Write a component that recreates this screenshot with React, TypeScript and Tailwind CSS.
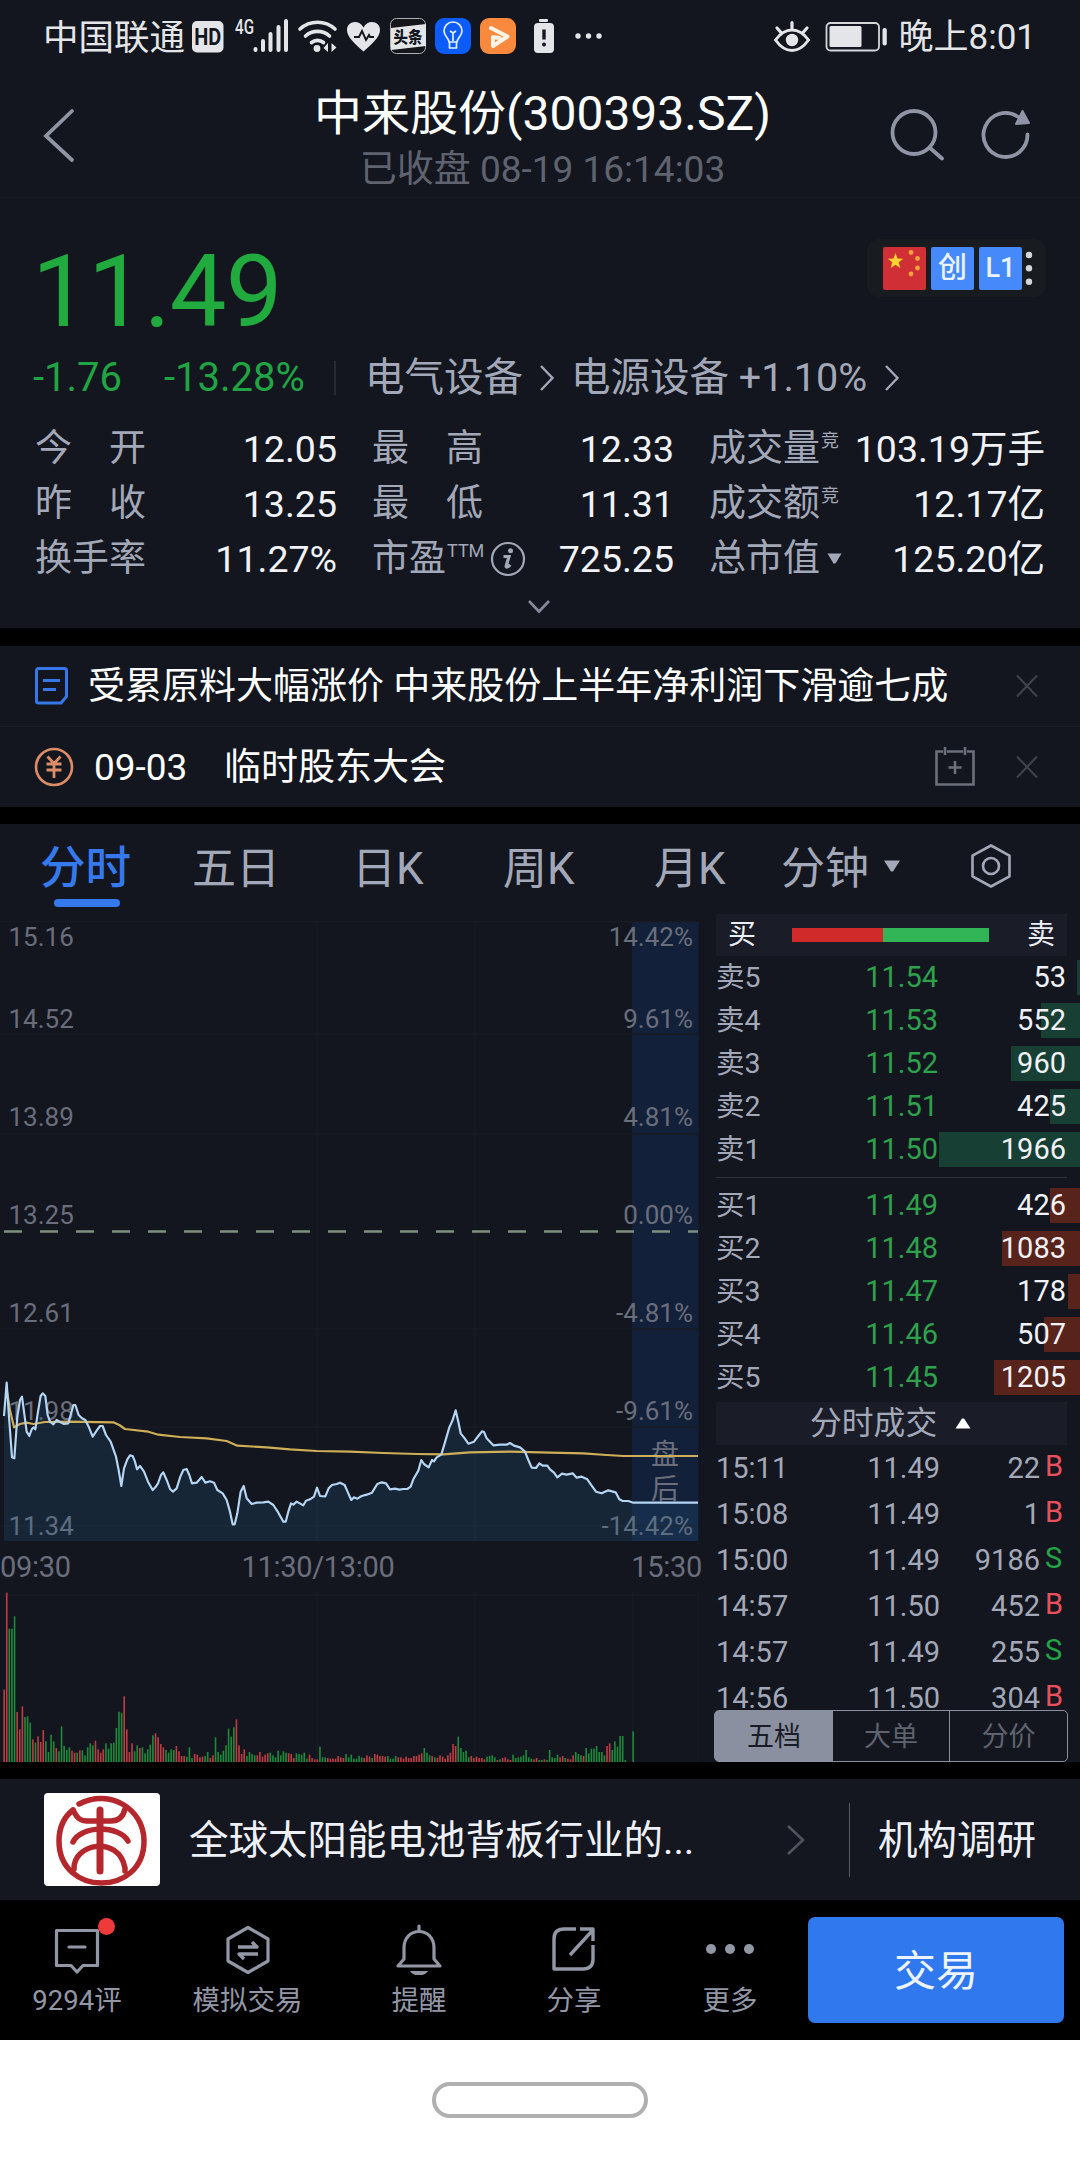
import React from "react";

const GRID_CELLS = [
  [
    { label: ["今", "开"], value: "12.05" },
    { label: ["最", "高"], value: "12.33" },
    { label: ["成交量"], sup: "竞", value: "103.19万手" },
  ],
  [
    { label: ["昨", "收"], value: "13.25" },
    { label: ["最", "低"], value: "11.31" },
    { label: ["成交额"], sup: "竞", value: "12.17亿" },
  ],
  [
    { label: ["换手率"], value: "11.27%" },
    { label: ["市盈"], sup: "TTM", info: true, value: "725.25" },
    { label: ["总市值"], arrow: true, value: "125.20亿" },
  ],
] as { label: string[]; value: string; sup?: string; info?: boolean; arrow?: boolean }[][];

const SELLS = [
  { name: "卖5", price: "11.54", qty: "53", bar: 3 },
  { name: "卖4", price: "11.53", qty: "552", bar: 39 },
  { name: "卖3", price: "11.52", qty: "960", bar: 69 },
  { name: "卖2", price: "11.51", qty: "425", bar: 30 },
  { name: "卖1", price: "11.50", qty: "1966", bar: 141 },
];
const BUYS = [
  { name: "买1", price: "11.49", qty: "426", bar: 30 },
  { name: "买2", price: "11.48", qty: "1083", bar: 78 },
  { name: "买3", price: "11.47", qty: "178", bar: 12 },
  { name: "买4", price: "11.46", qty: "507", bar: 36 },
  { name: "买5", price: "11.45", qty: "1205", bar: 86 },
];
const TRADES = [
  ["15:11", "11.49", "22", "B"],
  ["15:08", "11.49", "1", "B"],
  ["15:00", "11.49", "9186", "S"],
  ["14:57", "11.50", "452", "B"],
  ["14:57", "11.49", "255", "S"],
  ["14:56", "11.50", "304", "B"],
];

// Chart series use a unit of one third of a pixel.
const PRICE =
  "12,228 20,128 27,230 36,352 43,355 52,230 60,180 66,170 72,215 80,275 88,288 95,268 101,262 106,268 114,215 122,168 128,160 136,168 143,225 150,245 160,253 170,240 180,246 192,252 205,250 212,225 220,195 226,195 236,225 246,235 256,240 266,260 278,290 290,272 300,258 308,258 318,285 332,305 348,350 356,390 364,438 372,385 382,358 390,346 398,348 405,365 411,388 420,378 432,395 444,425 458,450 466,442 474,430 483,405 490,397 500,420 510,447 519,455 530,445 541,410 550,390 560,387 568,405 576,430 590,428 605,411 616,428 630,424 642,428 652,450 668,460 680,480 690,515 698,553 704,553 712,520 722,455 731,438 740,475 755,492 770,488 790,487 805,485 820,495 835,518 850,545 857,545 865,515 873,490 880,494 890,485 910,496 918,482 930,478 942,470 951,443 960,468 976,469 986,445 996,435 1010,432 1020,428 1034,435 1044,458 1054,480 1062,472 1072,476 1085,468 1100,464 1116,458 1132,432 1145,427 1158,430 1170,448 1185,446 1198,449 1210,447 1222,447 1232,440 1240,418 1255,392 1264,360 1272,372 1286,382 1296,360 1302,364 1310,352 1324,344 1334,310 1348,262 1358,240 1367,211 1375,245 1382,280 1394,295 1405,311 1422,305 1435,288 1446,274 1452,276 1460,295 1480,316 1500,314 1520,314 1530,309 1542,317 1560,322 1575,335 1585,360 1595,383 1608,384 1618,370 1628,377 1642,377 1650,388 1662,398 1672,412 1686,401 1700,404 1718,400 1730,413 1745,410 1762,418 1775,437 1788,455 1805,460 1825,451 1847,457 1858,478 1868,483 1885,483 1900,488 2094,488";
const AVERAGE =
  "20,150 30,210 42,262 60,252 80,248 100,252 135,246 200,245 340,247 358,255 375,267 445,275 475,284 540,291 620,295 680,303 712,317 800,322 870,328 950,333 1050,335 1150,339 1250,342 1330,343 1410,337 1530,335 1650,338 1750,340 1820,345 1870,348 2094,348";
const VOLUME =
  "r217 r508 g400 g400 g437 r150 r98 r167 g135 g137 g118 r68 g58 r77 r60 r96 g62 g30 g82 g62 r42 g32 g107 g48 g36 g44 r34 r28 g28 r35 g35 g20 g44 g56 g50 r64 r38 r28 r38 g56 g40 g56 g58 g102 g151 g148 r197 r98 r30 r56 g32 g50 r42 g44 g26 g38 g52 g80 r86 r74 r54 r44 g36 g28 g38 g36 r48 r32 r18 r18 g16 g44 g12 r24 r22 r14 r16 g18 g30 r12 r20 g74 g30 g22 g34 g50 g100 g76 g104 r128 r50 r24 r38 g18 g30 g24 g20 r20 r30 r16 r22 r26 g28 g20 g14 g34 g20 g32 g28 r26 r24 r12 g26 g24 g22 g28 g10 r22 r12 r8 r8 g46 g14 g14 r12 r10 r10 r10 r18 r14 r12 g24 g14 g22 g10 g10 g18 g14 r12 r20 r16 g12 r24 r22 r18 r18 r16 g18 g10 g10 g18 r14 r14 r10 r16 r12 r12 r18 r18 r22 r26 g42 g28 g20 r18 g14 r12 r20 r16 r10 r20 r28 r54 r48 g76 g42 g30 g34 g14 r18 r12 r16 r12 r12 r8 g16 g18 g20 g14 r6 g8 r12 r14 r8 r6 g22 g12 g14 g16 g20 g36 g14 g10 r8 r12 g6 g6 r8 g6 g36 g14 g12 g22 r14 r18 g12 r10 r8 r20 g30 g24 g20 r18 g42 g26 g40 g40 g48 g30 g30 g20 r48 r56 g36 g62 g46 g78 g78 g6 g0 g0 g92".split(
    " "
  );

const LEVELS: [string, string, number][] = [
  ["15.16", "14.42%", 937],
  ["14.52", "9.61%", 1019],
  ["13.89", "4.81%", 1117],
  ["13.25", "0.00%", 1215],
  ["12.61", "-4.81%", 1313],
  ["11.98", "-9.61%", 1411],
  ["11.34", "-14.42%", 1526],
];

function StatusBar() {
  return (
    <div className="flex h-[74px] items-center pl-[43px] pr-[44px] pt-[2px] text-[35px] leading-[72px] text-[#e4e5e8]">
      <span className="w-[149px] whitespace-nowrap text-[35.500px]">中国联通</span>
      <svg width="416" height="44" viewBox="192 16 416 44" fill="none">
        <rect x="192" y="21" width="31.5" height="31.5" rx="5" fill="#e4e5e8" />
        <text x="207.8" y="45" textAnchor="middle" fontSize="23" fontWeight="700" fill="#13161e" textLength="27" lengthAdjust="spacingAndGlyphs">HD</text>
        <text x="235" y="34" fontSize="20" fontWeight="500" fill="#e4e5e8" textLength="19" lengthAdjust="spacingAndGlyphs">4G</text>
        <g stroke="#e4e5e8" strokeWidth="4" strokeLinecap="round">
          <path d="M255.5 49v1M263 41v9M270.5 34v16M278.5 27v23M286 21v29" />
        </g>
        <g stroke="#e4e5e8" strokeWidth="3.6" strokeLinecap="round">
          <path d="M300 29a26 26 0 0 1 35 0M305.500 36a18 18 0 0 1 24 0M311.500 42.500a9.500 9.500 0 0 1 12 0" />
        </g>
        <circle cx="317" cy="48.500" r="3.400" fill="#e4e5e8" />
        <path d="M328 43v9l-4.500-4zM331.500 52v-9l5 4.500z" fill="#e4e5e8" />
        <path d="M363.500 51.500C355 44 347 37 347 30c0-9 12-11 16.500-2.500C368 19 380 21 380 30c0 7-8 14-16.500 21.500z" fill="#e4e5e8" />
        <path d="M354 37h5l3-6 4 9 3-5 1 2h4" stroke="#13161e" strokeWidth="1.900" />
        <rect x="390.500" y="18.500" width="35" height="35" rx="6" stroke="#aeb0b3" fill="#14161b" />
        <path d="M391 28l35-4v22l-35 4z" fill="#e4e5e8" />
        <text x="408" y="43" textAnchor="middle" fontSize="16" fontWeight="900" fill="#13161e" textLength="29" lengthAdjust="spacingAndGlyphs">头条</text>
        <rect x="435" y="18" width="36" height="36" rx="9" fill="#0b5cfb" />
        <path d="M449 42c0-4-5-6-5-11a9 9 0 0 1 18 0c0 5-5 7-5 11zM449.500 42v6h7v-6M453 41v-9M450 31l3 2 3-2" stroke="#e8f0ff" strokeWidth="1.700" strokeLinejoin="round" />
        <rect x="480" y="18" width="36" height="36" rx="9" fill="#f8893d" />
        <path d="M491 28l16.500 8.500L493 46v-9l6.500 1" stroke="#fff3e6" strokeWidth="4" strokeLinejoin="round" strokeLinecap="round" />
        <rect x="534" y="23" width="20" height="30" rx="4" fill="#e4e5e8" />
        <rect x="539" y="19" width="9" height="3" rx="1" fill="#e4e5e8" />
        <path d="M544 29.500v10" stroke="#13161e" strokeWidth="3.400" />
        <circle cx="544" cy="44.500" r="2" fill="#13161e" />
        <circle cx="578" cy="36" r="2.700" fill="#e4e5e8" />
        <circle cx="588.500" cy="36" r="2.700" fill="#e4e5e8" />
        <circle cx="599" cy="36" r="2.700" fill="#e4e5e8" />
      </svg>
      <div className="flex-1" />
      <svg width="116" height="36" viewBox="773 20 116 36" fill="none" className="mr-[10px] shrink-0">
        <path d="M775.500 40c5-7 10.500-10 16.500-10s11.500 3 16.500 10c-5 7-10.500 10.500-16.500 10.500S780.500 47 775.500 40z" stroke="#e4e5e8" strokeWidth="3" />
        <circle cx="792" cy="40" r="6.200" fill="#e4e5e8" />
        <path d="M792 22.500v6M777 28l4 4.500M807 28l-4 4.500" stroke="#e4e5e8" strokeWidth="3.200" strokeLinecap="round" />
        <rect x="826.500" y="23" width="52.500" height="27.500" rx="4" stroke="#d5d6d9" strokeWidth="1.800" />
        <rect x="829.500" y="26" width="32" height="21" rx="1.500" fill="#e4e5e8" />
        <rect x="882.500" y="28" width="4.300" height="17.500" rx="2" fill="#e4e5e8" />
      </svg>
      <span className="whitespace-nowrap">晚上8:01</span>
    </div>
  );
}

function Header() {
  return (
    <div className="flex h-[124px] items-start justify-between border-b border-[#171a22] pl-[42px] pr-[48px]">
      <svg width="140" height="60" viewBox="42 105 140 60" fill="none" className="mt-[31px]">
        <path d="M72 111L46 136l26 24" stroke="#8f95a5" strokeWidth="3.800" strokeLinecap="round" />
      </svg>
      <div className="flex flex-col items-center pl-[15px] pt-[1px]">
        <div className="h-[78px] text-[48px] leading-[78px] text-white">中来股份(300393.SZ)</div>
        <div className="h-[36px] text-[37px] leading-[34px] text-[#5f636f]">已收盘 08-19 16:14:03</div>
      </div>
      <svg width="144" height="60" viewBox="888 106 144 60" fill="none" className="mt-[31px]" stroke="#8f95a5" strokeWidth="3.800" strokeLinecap="round">
        <circle cx="914" cy="133.500" r="21.500" />
        <path d="M930 149l12 10.500M1027.500 135.500a22 22 0 1 1-10-18" />
        <path d="M1022.500 112l6.500 12-13 1z" fill="#8f95a5" strokeWidth="2" strokeLinejoin="round" />
      </svg>
    </div>
  );
}

function Badges() {
  return (
    <div className="mr-[34px] mt-[41px] flex h-[58px] w-[179px] items-center gap-[5px] rounded-[12px] bg-[#181b20] pl-[16px] text-[#eaf2ff]">
      <svg width="43" height="43" viewBox="0 0 43 43">
        <rect width="43" height="43" rx="2" fill="#cf2f35" />
        <path d="M12.500 6l2 5.500 5.800.2-4.600 3.600 1.600 5.600-4.800-3.200-4.800 3.200 1.600-5.600-4.600-3.600 5.800-.2z" fill="#ffd32e" />
        <g fill="#f5a33a">
          <circle cx="28" cy="5.500" r="2.400" />
          <circle cx="34.500" cy="11.500" r="2.400" />
          <circle cx="34.500" cy="21" r="2.400" />
          <circle cx="28" cy="27" r="2.400" />
        </g>
      </svg>
      <div className="h-[43px] w-[43px] rounded-[2px] bg-[#4589fb] text-center text-[29px] font-medium leading-[43px]">创</div>
      <div className="h-[43px] w-[43px] rounded-[2px] bg-[#4589fb] text-center text-[27px] font-medium leading-[43px]">L1</div>
      <svg width="8" height="40" viewBox="0 0 8 40" className="-ml-[2px]">
        <circle cx="4" cy="7" r="3.200" fill="#d4d6da" />
        <circle cx="4" cy="20.200" r="3.200" fill="#d4d6da" />
        <circle cx="4" cy="33.800" r="3.200" fill="#d4d6da" />
      </svg>
    </div>
  );
}

function Chevron({ className }: { className?: string }) {
  return (
    <svg width="16" height="28" viewBox="0 0 16 28" fill="none" className={className}>
      <path d="M2 2l11.500 12L2 26" stroke="#a3a8b8" strokeWidth="2.400" />
    </svg>
  );
}

function Quote() {
  return (
    <div className="h-[430px]">
      <div className="flex h-[152px] justify-between">
        <div className="pl-[32px] pt-[44px] text-[101px] leading-[100px] tracking-[-0.8px] text-[#21ab3f]">11.49</div>
        <Badges />
      </div>
      <div className="flex h-[56px] items-center text-[39.500px] leading-[56px] text-[#a3a8b8]">
        <span className="w-[131px] pl-[33px] text-[40px] text-[#21a544] whitespace-nowrap">-1.76</span>
        <span className="ml-[33px] w-[170px] whitespace-nowrap text-[40px] text-[#21a544]">-13.28%</span>
        <div className="h-[34px] w-[2px] bg-[#272a33]" />
        <span className="ml-[29px] w-[174px] whitespace-nowrap text-[39.500px]">电气设备</span>
        <Chevron />
        <span className="ml-[16px] whitespace-nowrap">电源设备 +1.10%</span>
        <Chevron className="ml-[17px]" />
      </div>
      <div className="mt-[15px]">
        {GRID_CELLS.map((row, r) => (
          <div key={r} className="flex h-[55px] text-[37px] leading-[56px]">
            {row.map((c, i) => (
              <div key={i} className={["ml-[35px] w-[302px]", "ml-[35px] w-[302px]", "ml-[35px] w-[336px]"][i] + " flex justify-between whitespace-nowrap"}>
                <div className="flex items-center text-[#a3a8b8]">
                  <div className={(c.label.length > 1 ? "w-[111px] " : "") + "flex justify-between"}>
                    {c.label.map((l) => (
                      <span key={l}>{l}</span>
                    ))}
                  </div>
                  {c.sup && <span className="-mt-[15px] ml-[1px] text-[18px] leading-[20px]">{c.sup}</span>}
                  {c.info && (
                    <svg width="36" height="36" viewBox="0 0 36 36" fill="none" className="ml-[6px]">
                      <circle cx="18" cy="18" r="16" stroke="#a3a8b8" strokeWidth="2.200" />
                      <circle cx="20.500" cy="9.800" r="2.500" fill="#a3a8b8" />
                      <path d="M13.500 15.500h5.500l-2.800 9.500c-.4 1.800 1.800 1.500 4-1.300" stroke="#a3a8b8" strokeWidth="3.200" />
                    </svg>
                  )}
                  {c.arrow && (
                    <svg width="17" height="12" viewBox="0 0 16 12" className="ml-[6px]">
                      <path d="M1 .5h14L9 10.500H7z" fill="#a3a8b8" />
                    </svg>
                  )}
                </div>
                <span className="text-[37.500px] text-[#f1f2f8]">{c.value}</span>
              </div>
            ))}
          </div>
        ))}
      </div>
      <svg width="26" height="16" viewBox="0 0 26 16" fill="none" className="ml-[526px] mt-[13px]">
        <path d="M3 2l10 10.500L23 2" stroke="#858a99" strokeWidth="2.600" />
      </svg>
    </div>
  );
}

function Cross() {
  return (
    <svg width="24" height="24" viewBox="0 0 24 24" className="mr-[41px] shrink-0">
      <path d="M2 1.500l20 21M22 1.500l-20 21" stroke="#40434d" strokeWidth="2" />
    </svg>
  );
}

function News() {
  return (
    <div className="text-[37px] leading-[80px] text-white">
      <div className="flex h-[81px] items-center border-b border-[#1b1e26]">
        <svg width="36" height="40" viewBox="0 0 36 40" fill="none" stroke="#3678ea" strokeWidth="3" className="ml-[33px]">
          <path d="M3.500 4.500a2 2 0 0 1 2-2h26a2 2 0 0 1 2 2v26l-5.500 6.500H5.500a2 2 0 0 1-2-2z" />
          <path d="M10 14.500h17M10 23.500h13" />
        </svg>
        <span className="ml-[19px] flex-1 whitespace-nowrap pt-[2px] leading-[78px]">受累原料大幅涨价 中来股份上半年净利润下滑逾七成</span>
        <Cross />
      </div>
      <div className="flex h-[80px] items-center">
        <svg width="40" height="40" viewBox="0 0 40 40" fill="none" stroke="#dc8c66" className="ml-[34px]">
          <circle cx="20" cy="20" r="18" strokeWidth="2.600" />
          <path d="M13.500 9.500l6.500 7 6.500-7M12.500 17h15M12.500 23h15M20 16.500V31" strokeWidth="2.800" />
        </svg>
        <span className="ml-[20px] w-[130px] pt-[2px] leading-[78px]">09-03</span>
        <span className="flex-1 pt-[2px] leading-[78px]">临时股东大会</span>
        <svg width="44" height="42" viewBox="0 0 44 42" fill="none" stroke="#6c707c" strokeWidth="2.600" className="mr-[38px]">
          <path d="M10 5.500H3.500v33h37v-33H34M14 5.500h16M12 1v8M32 1v8M22 15v13M15.500 21.500h13" />
        </svg>
        <Cross />
      </div>
    </div>
  );
}

function Tabs() {
  return (
    <div className="flex h-[97px] items-start pl-[40px] text-[44px] leading-[90px] text-[#a3a8b8] whitespace-nowrap">
      <div className="flex w-[152px] flex-col">
        <span className="h-[75px] text-[45.500px] font-medium text-[#3579ec]">分时</span>
        <div className="ml-[14px] h-[8px] w-[66px] rounded-full bg-[#3579ec]" />
      </div>
      <span className="w-[160px]">五日</span>
      <span className="w-[151px]">日K</span>
      <span className="w-[151px]">周K</span>
      <span className="w-[127px]">月K</span>
      <span className="w-[102px]">分钟</span>
      <svg width="18" height="13" viewBox="0 0 18 13" className="mt-[36px]">
        <path d="M1 .5h16L10 11.500H8z" fill="#a3a8b8" />
      </svg>
      <svg width="42" height="46" viewBox="0 0 42 46" fill="none" stroke="#a3a8b8" strokeWidth="2.600" className="ml-[69px] mt-[19px]" strokeLinejoin="round">
        <path d="M21 2.500l18.500 10.200v20.600L21 43.500 2.500 33.300V12.700z" />
        <circle cx="21" cy="23" r="8" />
      </svg>
    </div>
  );
}

function Charts() {
  return (
    <svg width="704" height="841" viewBox="0 921 704 841" className="shrink-0">
      <rect x="632" y="921" width="66.500" height="620" fill="#122039" />
      <g stroke="#181b23" strokeWidth="1.500">
        <path d="M0 921.500h698M0 1034h698M0 1134h698M0 1329h698M0 1427h698M0 1526h698M317 921v620M475 921v620M0 1595h698M317 1592v170M475 1592v170M633 1592v170M698 1592v170" />
      </g>
      <path d="M4 1231.500H698" stroke="#7f9080" strokeWidth="2.400" strokeDasharray="18 18" />
      <g fill="#6a6e7c" fontSize="26">
        {LEVELS.map(([l, r, y]) => (
          <React.Fragment key={l}>
            <text x="8.500" y={y + 9.3}>{l}</text>
            <text x="693" y={y + 9.3} textAnchor="end">{r}</text>
          </React.Fragment>
        ))}
        <text x="665" y="1464" textAnchor="middle" fontSize="28">盘</text>
        <text x="665" y="1499" textAnchor="middle" fontSize="28">后</text>
      </g>
      <g transform="translate(0 1340) scale(0.33333)" fill="none" strokeLinejoin="round">
        <polygon points={"12,603 " + PRICE + " 2094,603"} fill="#2a6a95" fillOpacity="0.2" />
        <polyline points={AVERAGE} stroke="#cfae58" strokeWidth="6.500" />
        <polyline points={PRICE} stroke="#b4d5f3" strokeWidth="6.500" />
      </g>
      <g fill="#6a6e7c" fontSize="29" letterSpacing="-0.300">
        <text x="0" y="1577">09:30</text>
        <text x="318" y="1577" textAnchor="middle">11:30/13:00</text>
        <text x="702" y="1577" textAnchor="end">15:30</text>
      </g>
      <g transform="translate(0 1340) scale(0.33333)">
        {VOLUME.map((v, i) => {
          const h = Number(v.slice(1));
          return <rect key={i} x={10 + i * 7.83} y={1266 - h} width="4.800" height={h} fill={v[0] === "r" ? "#bf3c44" : "#1e8b3b"} />;
        })}
      </g>
    </svg>
  );
}

function BookRow({ row, sell }: { row: (typeof SELLS)[number]; sell: boolean }) {
  return (
    <div className="relative flex h-[43px] items-center text-[29px] leading-[43px]">
      <div className={"absolute right-0 top-[4px] h-[35px] " + (sell ? "bg-[#183f33]" : "bg-[#58231a]")} style={{ width: row.bar }} />
      <span className="relative w-[100px] text-[28.500px] text-[#a3a8b8]">{row.name}</span>
      <span className="relative w-[122px] text-right text-[#2fa14c]">{row.price}</span>
      <span className="relative w-[128px] text-right text-[#f1f2f8]">{row.qty}</span>
    </div>
  );
}

function OrderBook() {
  return (
    <div className="-mt-[7px] flex h-[848px] flex-1 flex-col pl-[12px]">
      <div className="flex h-[42px] w-[351px] items-center justify-between bg-[#1a1d28] px-[12px] text-[28px] leading-[40px] text-[#eceef5]">
        <span>买</span>
        <div className="ml-[6px] flex h-[14px] w-[197px]">
          <div className="w-[91px] bg-[#d12a2a]" />
          <div className="flex-1 bg-[#32b556]" />
        </div>
        <span className="ml-[8px]">卖</span>
      </div>
      {SELLS.map((r) => (
        <BookRow key={r.name} row={r} sell />
      ))}
      <div className="mb-[6px] mt-[6px] h-[1px] w-[351px] bg-[#30333d]" />
      {BUYS.map((r) => (
        <BookRow key={r.name} row={r} sell={false} />
      ))}
      <div className="mt-[3px] flex h-[43px] w-[351px] items-center bg-[#1a1d28] pl-[94px] text-[31.800px] leading-[43px] text-[#a3a8b8]">
        分时成交
        <svg width="16" height="11" viewBox="0 0 16 11" className="ml-[18px]">
          <path d="M7 .5h2l6.500 10H.5z" fill="#fff" />
        </svg>
      </div>
      <div className="h-[265px]">
        {TRADES.map(([t, p, q, s], i) => (
          <div key={i} className="flex h-[46px] text-[29px] leading-[46px] text-[#a3a8b8]">
            <span className="w-[100px]">{t}</span>
            <span className="w-[124px] text-right">{p}</span>
            <span className="w-[100px] text-right">{q}</span>
            <span className={"-mt-[2px] ml-[5px] " + (s === "B" ? "text-[#e8505c]" : "text-[#22a545]")}>{s}</span>
          </div>
        ))}
      </div>
      <div className="-ml-[2px] flex h-[52px] w-[354px] shrink-0 rounded-[5px] border border-[#8b90a0] text-center text-[27px] leading-[52px] text-[#5f6370]">
        <span className="w-[118px] rounded-l-[3px] bg-[#8b90a0] text-[#1a1d27]">五档</span>
        <span className="w-[117px] border-r border-[#8b90a0]">大单</span>
        <span className="flex-1">分价</span>
      </div>
    </div>
  );
}

function Promo() {
  return (
    <div className="flex h-[121px] items-center bg-[#14171f] pl-[44px] text-[39.500px] leading-[118px] text-[#eef0f8] whitespace-nowrap">
      <svg width="116" height="93" viewBox="0 0 116 93" fill="none" stroke="#b4282d" strokeWidth="5.500" strokeLinecap="round">
        <rect width="116" height="93" rx="4" fill="#fff" stroke="none" />
        <path d="M35 11C66-5 100 16 100 48c0 56-85 56-85 0 0-13 5-24 14-31" />
        <path d="M56 17v61" strokeWidth="7" />
        <path d="M29 17c4 8 7 11 14 11h24c8 0 12-4 14-12M29 49c8-17 46-17 55-1M30 76c-1-26 45-34 51-1v3" />
      </svg>
      <span className="ml-[29px] w-[597px] pt-[3px]">全球太阳能电池背板行业的...</span>
      <svg width="20" height="32" viewBox="0 0 20 32" fill="none">
        <path d="M2 2l15 14L2 30" stroke="#50545f" strokeWidth="2.600" />
      </svg>
      <div className="ml-[43px] h-[74px] w-[1px] bg-[#555962]" />
      <span className="ml-[28px] pt-[3px]">机构调研</span>
    </div>
  );
}

function Tool({ label, children, className }: { label: string; children: React.ReactNode; className: string }) {
  return (
    <div className={"flex flex-col items-center text-[27.500px] leading-[36px] text-[#9297a6] whitespace-nowrap " + className}>
      <svg width="64" height="60" viewBox="0 3 64 60" fill="none" stroke="#9297a6" strokeWidth="3.200" strokeLinejoin="round" className="mb-[8px]">
        {children}
      </svg>
      {label}
    </div>
  );
}

function Toolbar() {
  return (
    <div className="flex h-[140px] items-start bg-black">
      <Tool label="9294评" className="mt-[15px] w-[154px]">
        <path d="M11.500 18.500h41v35H38l-6 6.500-6-6.500H11.500z" />
        <path d="M24 35h16" strokeLinecap="round" />
      </Tool>
      <div className="-ml-[56px] mt-[18px] h-[17px] w-[17px] rounded-full bg-[#ee3a3a]" />
      <Tool label="模拟交易" className="ml-[39px] mt-[15px] w-[187px]">
        <path d="M32 15.500l20 11.500v22L32 60.500 12 49V27z" />
        <path d="M22 35h19l-5-5M42 42H23l5 5" strokeWidth="3.400" />
      </Tool>
      <Tool label="提醒" className="mt-[15px] w-[156px]">
        <path d="M32 15v4M17 48V37c0-22 30-22 30 0v11l6 7H11z" transform="translate(0 -1)" strokeLinecap="round" />
        <path d="M23 59h18c-3 6-15 6-18 0z" fill="#9297a6" stroke="none" />
      </Tool>
      <Tool label="分享" className="mt-[15px] w-[154px]">
        <path d="M34 17H22Q12 17 12 27v30h29q10 0 10-10V33M28 43l22-24M38 17h13v12" strokeWidth="3.400" />
      </Tool>
      <Tool label="更多" className="mt-[15px] w-[158px]">
        <g fill="#9297a6" stroke="none">
          <circle cx="13" cy="37" r="5" />
          <circle cx="32" cy="37" r="5" />
          <circle cx="51" cy="37" r="5" />
        </g>
      </Tool>
      <div className="-ml-[1px] mt-[17px] h-[106px] w-[256px] rounded-[7px] bg-[#3078ee] text-center text-[42px] leading-[109px] text-[#edf4ff]">交易</div>
    </div>
  );
}

export default function App() {
  return (
    <div className="h-[2160px] w-[1080px] overflow-hidden bg-[#13161e] font-['Roboto','Noto_Sans_CJK_SC',sans-serif]">
      <StatusBar />
      <Header />
      <Quote />
      <div className="h-[18px] bg-black" />
      <News />
      <div className="h-[17px] bg-black" />
      <Tabs />
      <div className="flex h-[841px]">
        <Charts />
        <OrderBook />
      </div>
      <div className="h-[17px] bg-black" />
      <Promo />
      <Toolbar />
      <div className="flex h-[120px] justify-center bg-white pt-[42px]">
        <div className="h-[36px] w-[216px] rounded-full border-4 border-[#b0b0b0]" />
      </div>
    </div>
  );
}
